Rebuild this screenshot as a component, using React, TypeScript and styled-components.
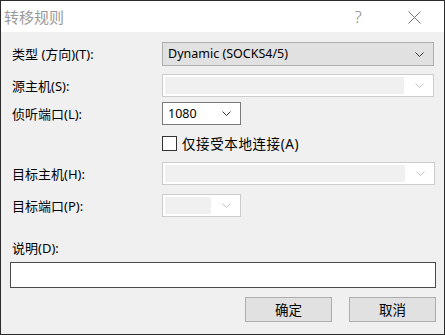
import React from 'react'
import styled, { createGlobalStyle } from 'styled-components'

const GlobalStyle = createGlobalStyle`
  html, body {
    margin: 0;
    padding: 0;
    background: #f0f0f0;
  }
  body {
    font-family: 'Noto Sans', 'Noto Sans CJK SC', sans-serif;
    font-size: 13px;
    color: #000;
  }
`

const Chevron: React.FC<{ disabled?: boolean }> = ({ disabled }) => (
  <svg width="9" height="5" viewBox="0 0 9 5">
    <path d="M0.5 0.5 L4.5 4.5 L8.5 0.5" fill="none" stroke={disabled ? '#c4c4c4' : '#333'} strokeWidth="1" />
  </svg>
)

const App: React.FC = () => {
  return (
    <Window>
      <GlobalStyle />
      <TitleBar>
        <Title>转移规则</Title>
        <HelpButton>?</HelpButton>
        <CloseButton>
          <svg width="13" height="13" viewBox="0 0 13 13">
            <path d="M0.5 0.5 L12.5 12.5 M12.5 0.5 L0.5 12.5" stroke="#777" strokeWidth="1" fill="none" />
          </svg>
        </CloseButton>
      </TitleBar>

      <Body>
        <Row $mt={10} $h={24}>
          <Label>类型 (方向)(T):</Label>
          <Combo $variant="button" $width={272}>
            <ComboText>Dynamic (SOCKS4/5)</ComboText>
            <Chevron />
          </Combo>
        </Row>

        <Row $mt={8} $h={23}>
          <Label>源主机(S):</Label>
          <Combo $variant="disabled" $width={272}>
            <DisabledFill />
            <Chevron disabled />
          </Combo>
        </Row>

        <Row $mt={5} $h={23}>
          <Label>侦听端口(L):</Label>
          <Combo $variant="edit" $width={79}>
            <ComboText>1080</ComboText>
            <Chevron />
          </Combo>
        </Row>

        <Row $mt={11} $h={15}>
          <Label />
          <CheckLabel>
            <CheckBox />
            <CheckText>仅接受本地连接(A)</CheckText>
          </CheckLabel>
        </Row>

        <Row $mt={11} $h={23}>
          <Label>目标主机(H):</Label>
          <Combo $variant="disabled" $width={273}>
            <DisabledFill />
            <Chevron disabled />
          </Combo>
        </Row>

        <Row $mt={9} $h={23}>
          <Label>目标端口(P):</Label>
          <Combo $variant="disabled" $width={79}>
            <DisabledFill />
            <Chevron disabled />
          </Combo>
        </Row>

        <DescLabel>说明(D):</DescLabel>
        <TextBox />

        <ButtonBar>
          <Button>确定</Button>
          <Button>取消</Button>
        </ButtonBar>
      </Body>
    </Window>
  )
}

const Window = styled.div`
  width: 445px;
  height: 335px;
  box-sizing: border-box;
  border: 1px solid #2b2b2b;
  background: #f0f0f0;
  display: flex;
  flex-direction: column;
  overflow: hidden;
`

const TitleBar = styled.div`
  height: 31px;
  background: #fff;
  display: flex;
  align-items: center;
  flex-shrink: 0;
`

const Title = styled.div`
  flex: 1;
  padding-left: 3px;
  font-family: 'Noto Sans CJK SC', sans-serif;
  font-size: 15px;
  line-height: 18px;
  color: #9a9a9a;
`

const HelpButton = styled.div`
  width: 20px;
  margin-right: 40px;
  text-align: center;
  font-family: 'Noto Sans', sans-serif;
  font-size: 17px;
  font-weight: 300;
  line-height: 18px;
  color: #888;
`

const CloseButton = styled.div`
  width: 13px;
  margin-right: 23px;
  display: flex;
  align-items: center;
  margin-top: 1px;
`

const Body = styled.div`
  flex: 1;
  display: flex;
  flex-direction: column;
  padding: 0 8px 0 9px;
`

const Row = styled.div<{ $mt: number; $h: number }>`
  display: flex;
  align-items: center;
  margin-top: ${(p) => p.$mt}px;
  height: ${(p) => p.$h}px;
`

const Label = styled.div`
  width: 152px;
  padding-left: 2px;
  box-sizing: border-box;
  line-height: 16px;
  white-space: nowrap;
`

const Combo = styled.div<{ $variant: 'button' | 'edit' | 'disabled'; $width: number }>`
  width: ${(p) => p.$width}px;
  height: 100%;
  box-sizing: border-box;
  display: flex;
  align-items: center;
  padding: ${(p) => (p.$variant === 'disabled' ? '2px 9px 2px 2px' : '0 9px 0 5px')};
  gap: 8px;
  border: 1px solid
    ${(p) => (p.$variant === 'button' ? '#adadad' : p.$variant === 'edit' ? '#7a7a7a' : '#cccccc')};
  background: ${(p) => (p.$variant === 'button' ? '#e1e1e1' : '#fff')};

  svg {
    flex-shrink: 0;
    margin-left: auto;
  }
`

const ComboText = styled.span`
  font-size: 12.5px;
  line-height: 16px;
  white-space: nowrap;
`

const DisabledFill = styled.div`
  flex: 1;
  align-self: stretch;
  margin-right: 3px;
  background: #f0f0f0;
`

const CheckLabel = styled.label`
  display: flex;
  align-items: center;
  gap: 5px;
`

const CheckText = styled.span`
  font-size: 13.5px;
  line-height: 16px;
  letter-spacing: 0.6px;
  white-space: nowrap;
`

const CheckBox = styled.span`
  width: 13px;
  height: 13px;
  border: 1px solid #333;
  background: #fff;
  display: inline-block;
`

const DescLabel = styled.div`
  margin-top: 23px;
  padding-left: 2px;
  height: 16px;
  line-height: 16px;
`

const TextBox = styled.div`
  margin-top: 6px;
  height: 26px;
  box-sizing: border-box;
  border: 1px solid #4a4a4a;
  background: #fff;
`

const ButtonBar = styled.div`
  margin-top: 9px;
  display: flex;
  justify-content: flex-end;
  gap: 17px;
`

const Button = styled.div`
  width: 87px;
  height: 25px;
  box-sizing: border-box;
  border: 1px solid #adadad;
  background: #e1e1e1;
  display: flex;
  align-items: center;
  justify-content: center;
  font-size: 13.5px;
  line-height: 16px;
`

export default App
